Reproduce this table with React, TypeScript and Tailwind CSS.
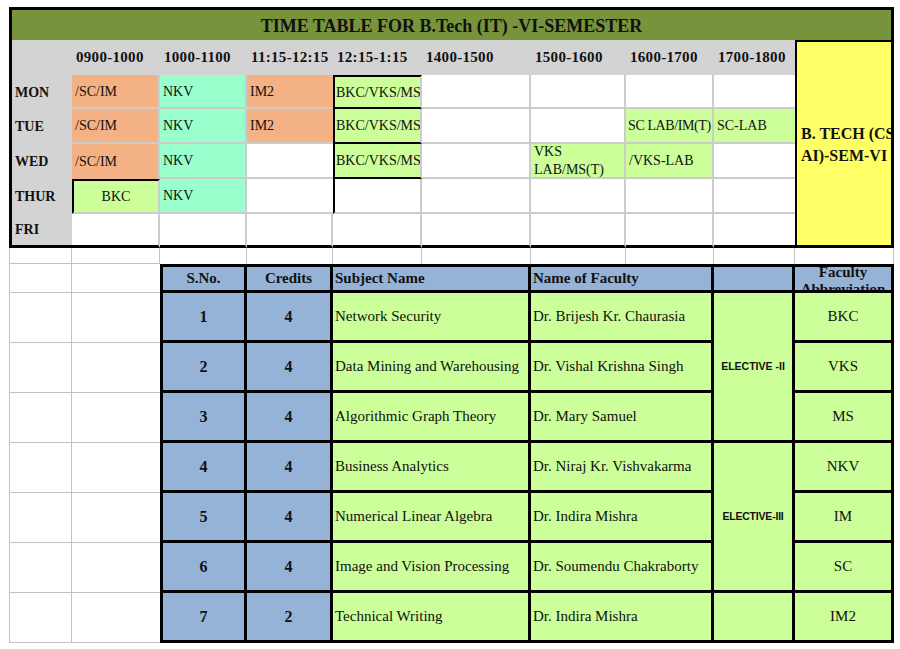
import React from "react";

const gR = "border-r-2 border-r-[#cccccc]";
const gB = "border-b-2 border-b-[#cccccc]";
const lR = "border-r border-r-[#c2c2c2]";
const lB = "border-b border-b-[#c2c2c2]";
const lL = "border-l border-l-[#c2c2c2]";
const kL = "border-l-2 border-l-black";
const kT = "border-t-2 border-t-black";
const kB = "border-b-2 border-b-black";
const KR = "border-r-[3px] border-r-black";
const KB = "border-b-[3px] border-b-black";
const KL = "border-l-[3px] border-l-black";
const KT = "border-t-[3px] border-t-black";

const SAL = "bg-[#f4b183]";
const MINT = "bg-[#99ffcc]";
const GRN = "bg-[#ccff99]";
const GRY = "bg-[#d3d3d3]";
const BLU = "bg-[#95b3d7]";
const WHT = "bg-white";

function C({ className = "", children }: { className?: string; children?: React.ReactNode }) {
  return (
    <div className={"box-border overflow-hidden flex items-center whitespace-nowrap " + className}>
      {children}
    </div>
  );
}

const times = ["0900-1000", "1000-1100", "11:15-12:15", "12:15-1:15", "1400-1500", "1500-1600", "1600-1700", "1700-1800"];

const subjects = [
  ["1", "4", "Network Security", "Dr. Brijesh Kr. Chaurasia", "BKC"],
  ["2", "4", "Data Mining and Warehousing", "Dr. Vishal Krishna Singh", "VKS"],
  ["3", "4", "Algorithmic Graph Theory", "Dr. Mary Samuel", "MS"],
  ["4", "4", "Business Analytics", "Dr. Niraj Kr. Vishvakarma", "NKV"],
  ["5", "4", "Numerical Linear Algebra", "Dr. Indira Mishra", "IM"],
  ["6", "4", "Image and Vision Processing", "Dr. Soumendu Chakraborty", "SC"],
  ["7", "2", "Technical Writing", "Dr. Indira Mishra", "IM2"],
];

const dc = "px-[3px] text-[14px]";
const ec = "pl-[1px] pr-[1px] text-[14px]";

export default function App() {
  return (
    <div className="w-[900px] h-[649px] bg-white pt-[7px] pl-[9px] font-['Liberation_Serif',serif] text-[#111]">
      <div className="grid grid-cols-[63px_88px_87px_86px_89px_109px_95px_88px_81px_99px] grid-rows-[33px_35px_34px_35px_35px_35px_34px_16px_29px_50px_50px_50px_50px_50px_50px_50px]">
        {/* Title */}
        <C className={`col-span-10 bg-[#77933c] justify-center ${KT} ${KL} ${KR} font-bold text-[18px] pt-[2px]`}>
          TIME TABLE FOR B.Tech (IT) -VI-SEMESTER
        </C>

        {/* Header row */}
        <C className={`${GRY} ${KL}`} />
        {times.map((t) => (
          <C key={t} className={`${GRY} px-[4px] font-bold text-[15px] tracking-[0.3px]`}>
            {t}
          </C>
        ))}
        <C className={`row-span-6 bg-[#ffff66] ${kL} ${kT} ${KR} ${KB} flex-col !items-stretch justify-center font-bold text-[16px] leading-[22px] pt-[2px]`}>
          <div className="pl-[4px]">B. TECH (CS-</div>
          <div className="text-center">AI)-SEM-VI</div>
        </C>

        {/* MON */}
        <C className={`${GRY} ${KL} px-[3px] font-bold text-[14px]`}>MON</C>
        <C className={`${SAL} ${gR} ${gB} ${dc}`}>/SC/IM</C>
        <C className={`${MINT} ${gR} ${gB} ${dc}`}>NKV</C>
        <C className={`${SAL} ${gB} ${dc}`}>IM2</C>
        <C className={`${GRN} ${kL} ${kT} ${kB} ${gR} ${ec}`}>BKC/VKS/MS</C>
        <C className={`${WHT} ${gR} ${gB}`} />
        <C className={`${WHT} ${gR} ${gB}`} />
        <C className={`${WHT} ${gR} ${gB}`} />
        <C className={`${WHT} ${gB}`} />

        {/* TUE */}
        <C className={`${GRY} ${KL} px-[3px] font-bold text-[14px]`}>TUE</C>
        <C className={`${SAL} ${gR} ${gB} ${dc}`}>/SC/IM</C>
        <C className={`${MINT} ${gR} ${gB} ${dc}`}>NKV</C>
        <C className={`${SAL} ${gB} ${dc}`}>IM2</C>
        <C className={`${GRN} ${kL} ${kB} ${gR} ${ec}`}>BKC/VKS/MS</C>
        <C className={`${WHT} ${gR} ${gB}`} />
        <C className={`${WHT} ${gR} ${gB}`} />
        <C className={`${GRN} ${gR} ${gB} pl-[2px] text-[14px] tracking-[-0.4px]`}>SC LAB/IM(T)</C>
        <C className={`${GRN} ${gB} ${dc}`}>SC-LAB</C>

        {/* WED */}
        <C className={`${GRY} ${KL} px-[3px] font-bold text-[14px]`}>WED</C>
        <C className={`${SAL} ${gR} ${dc}`}>/SC/IM</C>
        <C className={`${MINT} ${gR} ${gB} ${dc}`}>NKV</C>
        <C className={`${WHT} ${gB}`} />
        <C className={`${GRN} ${kL} ${kB} ${gR} ${ec}`}>BKC/VKS/MS</C>
        <C className={`${WHT} ${gR} ${gB}`} />
        <C className={`${GRN} ${gR} ${gB} ${dc} leading-[18px] whitespace-normal`}>
          <div>
            VKS
            <br />
            LAB/MS(T)
          </div>
        </C>
        <C className={`${GRN} ${gR} ${gB} ${dc}`}>/VKS-LAB</C>
        <C className={`${WHT} ${gB}`} />

        {/* THUR */}
        <C className={`${GRY} ${KL} px-[3px] font-bold text-[14px]`}>THUR</C>
        <C className={`${GRN} ${kL} ${kT} ${gR} ${gB} ${dc} justify-center`}>BKC</C>
        <C className={`${MINT} ${gR} ${gB} ${dc}`}>NKV</C>
        <C className={`${WHT} ${gB}`} />
        <C className={`${WHT} ${kL} ${gR} ${gB}`} />
        <C className={`${WHT} ${gR} ${gB}`} />
        <C className={`${WHT} ${gR} ${gB}`} />
        <C className={`${WHT} ${gR} ${gB}`} />
        <C className={`${WHT} ${gB}`} />

        {/* FRI */}
        <C className={`${GRY} ${KL} ${KB} px-[3px] font-bold text-[14px]`}>FRI</C>
        <C className={`${WHT} ${gR} ${KB}`} />
        <C className={`${WHT} ${gR} ${KB}`} />
        <C className={`${WHT} ${gR} ${KB}`} />
        <C className={`${WHT} ${gR} ${KB}`} />
        <C className={`${WHT} ${gR} ${KB}`} />
        <C className={`${WHT} ${gR} ${KB}`} />
        <C className={`${WHT} ${gR} ${KB}`} />
        <C className={`${WHT} ${KB}`} />

        {/* Spacer row */}
        <C className={`${WHT} ${lL} ${lR} ${lB}`} />
        <C className={`${WHT} ${lR} ${lB}`} />
        <C className={`${WHT} ${lR}`} />
        <C className={`${WHT} ${lR}`} />
        <C className={`${WHT} ${lR}`} />
        <C className={`${WHT} ${lR}`} />
        <C className={`${WHT} ${lR}`} />
        <C className={`${WHT} ${lR}`} />
        <C className={`${WHT} ${lR}`} />
        <C className={`${WHT} ${lR}`} />

        {/* Lower table header */}
        <C className={`${WHT} ${lL} ${lR} ${lB}`} />
        <C className={`${WHT} ${lB}`} />
        <C className={`${BLU} ${KL} ${KT} ${KR} ${KB} justify-center font-bold text-[15px]`}>S.No.</C>
        <C className={`${BLU} ${KT} ${KR} ${KB} justify-center font-bold text-[15px]`}>Credits</C>
        <C className={`col-span-2 ${BLU} ${KT} ${KR} ${KB} px-[2px] font-bold text-[15px]`}>Subject Name</C>
        <C className={`col-span-2 ${BLU} ${KT} ${KR} ${KB} px-[2px] font-bold text-[15px]`}>Name of Faculty</C>
        <C className={`${BLU} ${KT} ${KR} ${KB}`} />
        <C className={`${BLU} ${KT} ${KR} ${KB} justify-center font-bold text-[15px] leading-[17px] text-center`}>
          <div className="pt-[4px]">
            Faculty
            <br />
            Abbreviation
          </div>
        </C>

        {/* Subject rows */}
        {subjects.map(([sno, cr, subj, fac, ab], i) => (
          <React.Fragment key={sno}>
            <C className={`${WHT} ${lL} ${lR} ${lB}`} />
            <C className={`${WHT} ${lB}`} />
            <C className={`${BLU} ${KL} ${KR} ${KB} justify-center font-bold text-[16px]`}>{sno}</C>
            <C className={`${BLU} ${KR} ${KB} justify-center font-bold text-[16px]`}>{cr}</C>
            <C className={`col-span-2 ${GRN} ${KR} ${KB} px-[2px] text-[15px]`}>{subj}</C>
            <C className={`col-span-2 ${GRN} ${KR} ${KB} px-[2px] text-[15px]`}>{fac}</C>
            {i === 0 && (
              <C className={`row-span-3 ${GRN} ${KR} ${KB} justify-center font-['Liberation_Sans',sans-serif] font-bold text-[10.5px]`}>
                ELECTIVE -II
              </C>
            )}
            {i === 3 && (
              <C className={`row-span-3 ${GRN} ${KR} ${KB} justify-center font-['Liberation_Sans',sans-serif] font-bold text-[10.5px] tracking-[-0.2px]`}>
                ELECTIVE-III
              </C>
            )}
            {i === 6 && <C className={`${GRN} ${KR} ${KB}`} />}
            <C className={`${GRN} ${KR} ${KB} justify-center text-[15px]`}>{ab}</C>
          </React.Fragment>
        ))}
      </div>
    </div>
  );
}
